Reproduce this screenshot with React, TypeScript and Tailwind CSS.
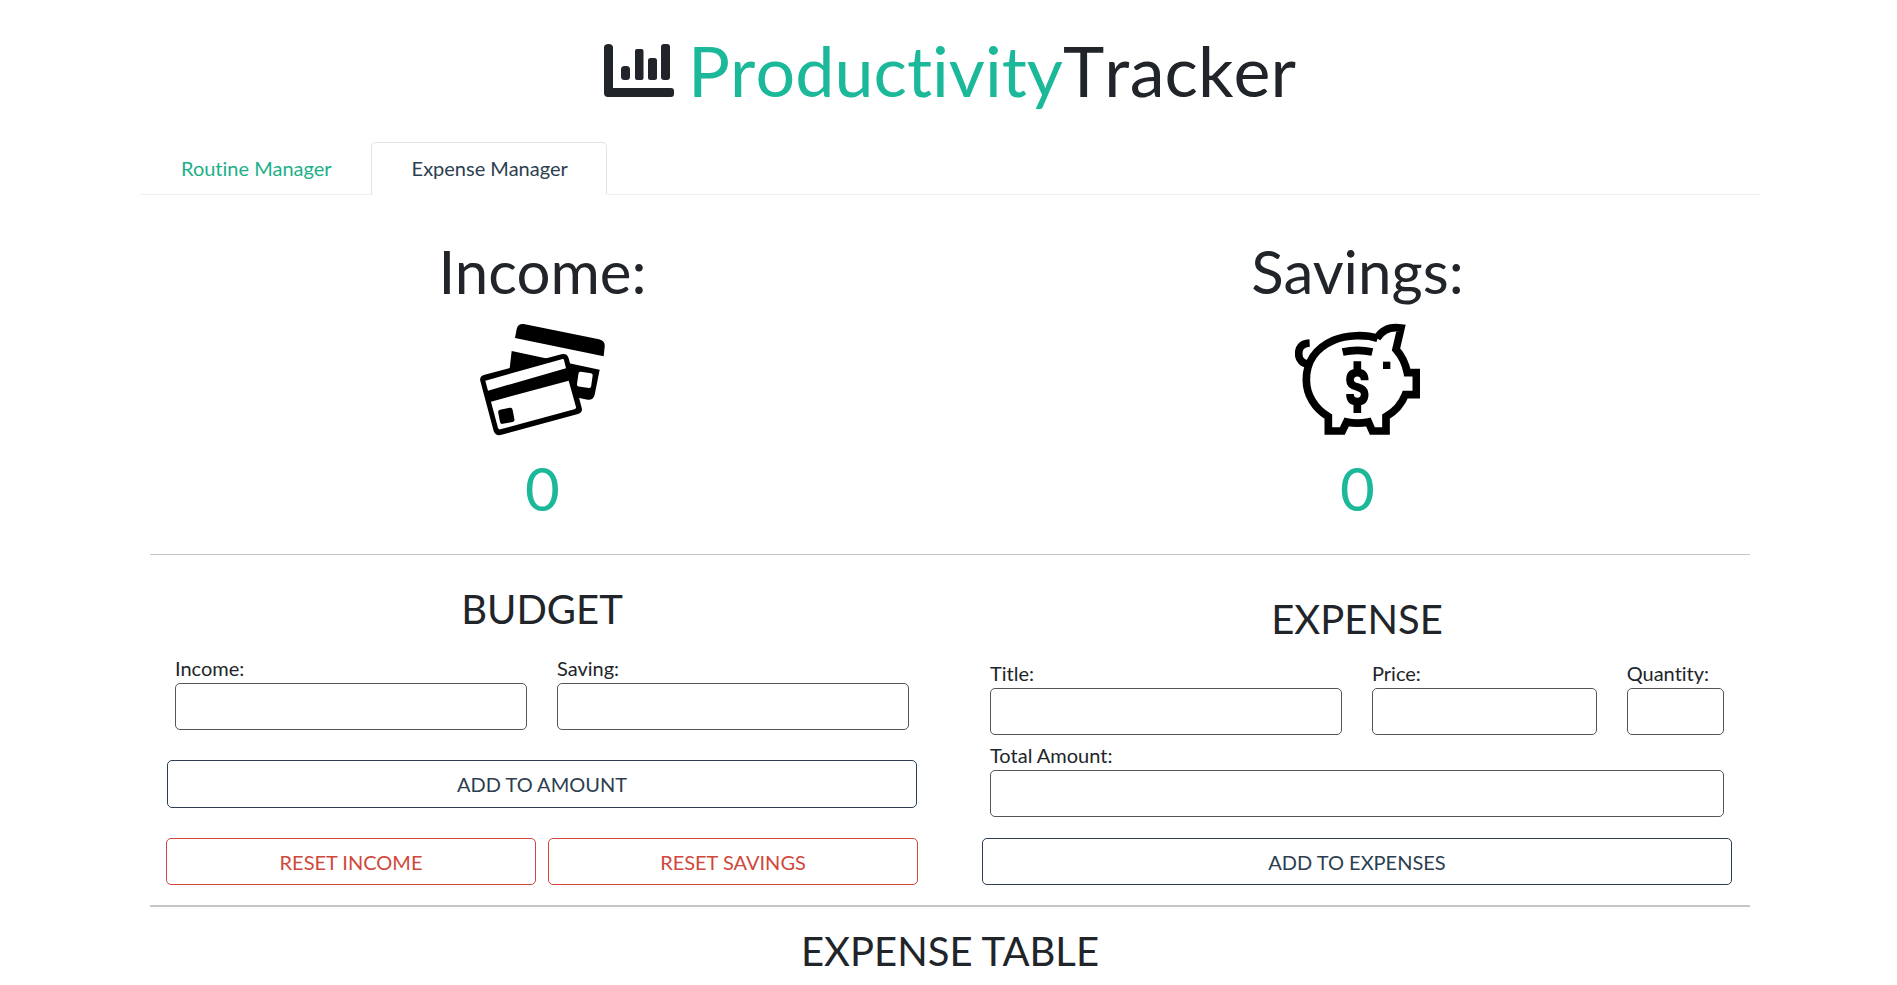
import { useState, type ReactNode } from "react";

function ChartIcon() {
  return (
    <svg viewBox="0 0 70 53" className="mr-[14px] h-[53px] w-[70px]" fill="currentColor" aria-hidden="true">
      <path d="M0 3.5 Q0 0 4.5 0 Q9 0 9 3.5 V44 H67 Q70 44 70 47 V50 Q70 53 67 53 H4 Q0 53 0 49Z" />
      <rect x="17" y="22" width="9" height="14" rx="3.5" />
      <rect x="31" y="5" width="8.5" height="31" rx="2" />
      <rect x="44" y="14" width="9" height="22" rx="2.5" />
      <rect x="57" y="0" width="9" height="36" rx="3" />
    </svg>
  );
}

function CardsIcon() {
  return (
    <svg viewBox="150 261 375 375" className="mx-auto my-[10px] block size-[125px]" aria-hidden="true">
      <path d="M255 324 L260 297 Q264 280 281 282 L507 328 Q526 333 524 350 L521 379Z" />
      <path d="M245 363 L509 419 L494 494 Q490 511 473 509 L234 459Z" />
      <rect x="443" y="427" width="43" height="45" rx="6" fill="#fff" transform="rotate(8 464 449)" />
      <path
        d="M164 434 L394 373 Q411 368 416 385 L455 533 Q459 547 444 552 L212 615 Q196 618 191 603 L151 453 Q147 439 164 434Z"
      />
      <path fill="#fff" d="M166 452 L398 387 Q401 386 402 390 L408 415 L174 482Z" />
      <path fill="#fff" d="M183 515 L416 452 L438 531 Q439 536 433 538 L211 598 Q206 599 204 594Z" />
      <rect x="207" y="536" width="44" height="43" rx="7" transform="rotate(-11 229 558)" />
    </svg>
  );
}

function PiggyIcon() {
  return (
    <svg
      viewBox="165 261 375 375"
      className="mx-auto my-[10px] block size-[125px]"
      fill="none"
      stroke="#000"
      strokeWidth="23"
      aria-hidden="true"
    >
      <path d="M209 339 C184 340 175 355 176 373 C177 390 188 401 203 402" />
      <path d="M413 325 C378 313 319 314 281 331 C225 355 199 399 199 449 C199 494 224 536 265 560 V603 H307 L320 576 Q352 583 385 576 L397 603 H438 V560 Q479 537 496 494 H529 V428 H502 Q494 387 468 358 L483 294 C449 289 425 301 411 325" />
      <path d="M308 366 Q352 356 397 366" />
      <path d="M374 451 Q374 428 352 428 Q330 428 330 450 Q330 466 352 471 Q374 477 374 492 Q374 515 352 515 Q330 515 330 492" />
      <path d="M352 394 V429 M352 514 V549" />
      <rect x="429" y="395" width="22" height="22" fill="#000" stroke="none" />
    </svg>
  );
}

function Summary({ title, amount, children }: { title: string; amount: number; children: ReactNode }) {
  return (
    <section className="text-center text-[60px] leading-[72px]">
      <h2>{title}</h2>
      {children}
      <p className="text-[#1cb89a]">{amount}</p>
    </section>
  );
}

function Field({
  id,
  label,
  className,
  readOnly,
}: {
  id: string;
  label: string;
  className: string;
  readOnly?: boolean;
}) {
  return (
    <div className={className}>
      <label htmlFor={id} className="block">
        {label}
      </label>
      <input
        id={id}
        readOnly={readOnly}
        className="block h-[47px] w-full min-w-0 rounded-[5px] border border-[#555] px-3 outline-none focus:border-[#1cb89a]"
      />
    </div>
  );
}

const button = "rounded-[5px] border text-center";
const dark = "border-[#2c3e50] text-[#2c3e50] hover:bg-[#2c3e50] hover:text-white";
const danger = "border-[#d0483c] text-[#d0483c] hover:bg-[#d0483c] hover:text-white";
const tabs = ["Routine Manager", "Expense Manager"];

export default function App() {
  const [active, setActive] = useState(1);

  return (
    <div className="min-h-screen bg-white pt-7 pr-[132px] pb-3 pl-[135px] font-['Lato',sans-serif] text-[20px] leading-[30px] text-[#212529] [font-variant-ligatures:none]">
      <h1 className="flex items-center justify-center text-[70px] leading-[84px] [font-kerning:none]">
        <ChartIcon />
        <span className="text-[#1cb89a]">Productivity</span>Tracker
      </h1>

      <nav className="mx-[5px] mt-[30px] flex border-b border-[#ecf0f1]">
        {tabs.map((tab, i) => (
          <a
            key={tab}
            href="#"
            onClick={() => setActive(i)}
            className={
              i === active
                ? "-mb-px rounded-t-[5px] border border-[#dfe3e5] border-b-white bg-white pt-[10px] pr-[38px] pb-[11px] pl-10 text-[#2c3e50]"
                : "-mb-px border border-transparent pt-[10px] pr-[38px] pb-[11px] pl-10 text-[#1cb089]"
            }
          >
            {tab}
          </a>
        ))}
      </nav>

      <main>
        <div className="mt-10 grid grid-cols-2">
          <Summary title="Income:" amount={0}>
            <CardsIcon />
          </Summary>
          <Summary title="Savings:" amount={0}>
            <PiggyIcon />
          </Summary>
        </div>

        <hr className="mx-[15px] mt-[30px] border-t border-[#c4c6c7]" />

        <div className="grid grid-cols-2">
          <section className="pt-[30px] pr-[33px] pl-8">
            <h3 className="text-center text-[40px] leading-[48px]">BUDGET</h3>
            <form onSubmit={(e) => e.preventDefault()}>
              <div className="mx-2 mt-5 grid grid-cols-2 gap-x-[30px]">
                <Field id="income" label="Income:" className="" />
                <Field id="saving" label="Saving:" className="" />
              </div>
              <button type="submit" className={`mt-[30px] h-12 w-full ${button} ${dark}`}>
                ADD TO AMOUNT
              </button>
              <div className="-mx-px mt-[30px] grid grid-cols-2 gap-x-3">
                <button type="button" className={`h-[47px] ${button} ${danger}`}>
                  RESET INCOME
                </button>
                <button type="button" className={`h-[47px] ${button} ${danger}`}>
                  RESET SAVINGS
                </button>
              </div>
            </form>
          </section>

          <section className="pt-10 pr-[33px] pl-8">
            <h3 className="text-center text-[40px] leading-[48px]">EXPENSE</h3>
            <form onSubmit={(e) => e.preventDefault()}>
              <div className="mx-2 mt-[15px] grid grid-cols-12 gap-x-[30px] gap-y-[5px]">
                <Field id="title" label="Title:" className="col-span-6" />
                <Field id="price" label="Price:" className="col-span-4" />
                <Field id="quantity" label="Quantity:" className="col-span-2" />
                <Field id="total" label="Total Amount:" className="col-span-12" readOnly />
              </div>
              <button type="submit" className={`mt-[21px] h-[47px] w-full ${button} ${dark}`}>
                ADD TO EXPENSES
              </button>
            </form>
          </section>
        </div>

        <hr className="mx-[15px] mt-5 border-t-2 border-[#c4c6c7]" />
        <h3 className="mt-5 text-center text-[40px] leading-[48px]">EXPENSE TABLE</h3>
      </main>
    </div>
  );
}
